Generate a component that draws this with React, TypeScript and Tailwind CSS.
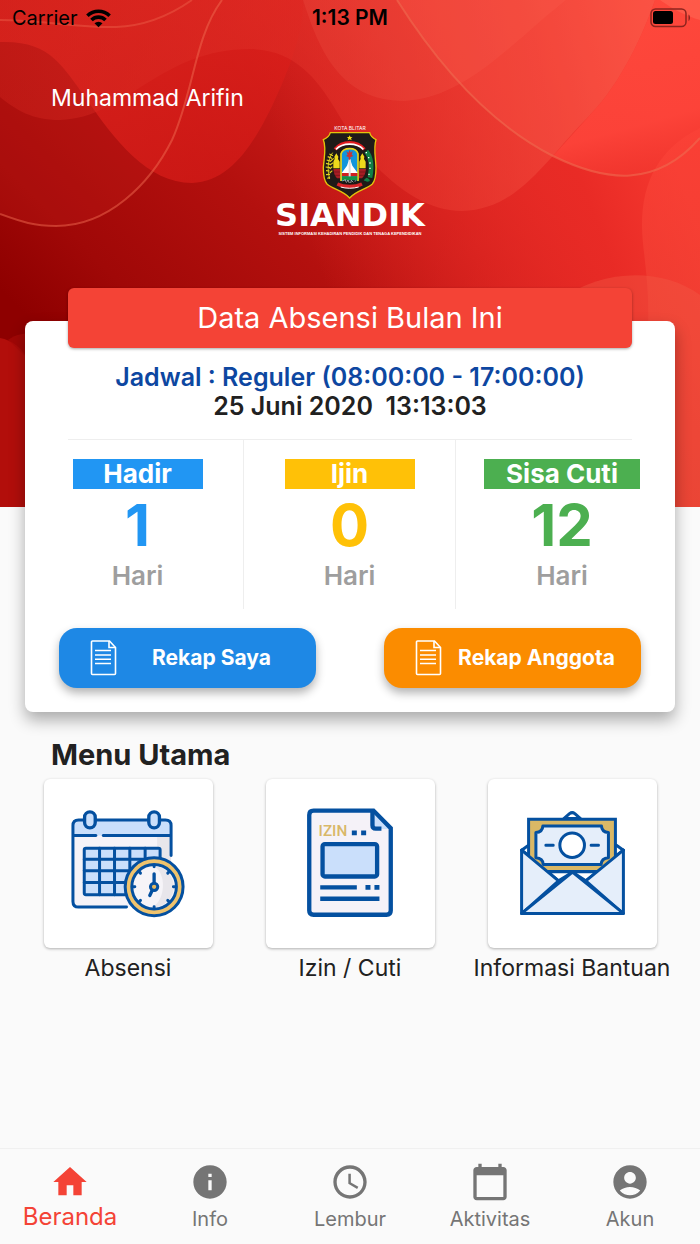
import React from "react";
import {
  MdAccessTime,
  MdAccountCircle,
  MdCalendarToday,
  MdHome,
  MdInfo,
} from "react-icons/md";

const BLUE = "#0450a0";
const SKY = "#cadffb";

function HeroArt() {
  return (
    <svg
      className="absolute inset-x-0 top-0 h-[507px] w-full"
      viewBox="0 0 700 507"
      preserveAspectRatio="none"
      aria-hidden="true"
    >
      <defs>
        <linearGradient id="base" gradientUnits="userSpaceOnUse" x1="0" y1="290" x2="400" y2="-110">
          <stop offset="0" stopColor="#8e0000" />
          <stop offset="0.16" stopColor="#a00807" />
          <stop offset="0.42" stopColor="#b3100e" />
          <stop offset="0.65" stopColor="#cc1d1a" />
          <stop offset="1" stopColor="#ee342c" />
        </linearGradient>
        <linearGradient id="glow" gradientUnits="userSpaceOnUse" x1="330" y1="300" x2="680" y2="180">
          <stop offset="0" stopColor="#e82a25" stopOpacity="0" />
          <stop offset="0.75" stopColor="#ea2b26" stopOpacity="0.9" />
          <stop offset="1" stopColor="#f5382f" />
        </linearGradient>
        <linearGradient id="wave" gradientUnits="userSpaceOnUse" x1="0" y1="140" x2="700" y2="0">
          <stop offset="0" stopColor="#d2241d" stopOpacity="0.4" />
          <stop offset="0.5" stopColor="#e4332b" stopOpacity="0.5" />
          <stop offset="1" stopColor="#fd5a49" stopOpacity="0.8" />
        </linearGradient>
        <linearGradient id="ridge" gradientUnits="userSpaceOnUse" x1="100" y1="0" x2="250" y2="190">
          <stop offset="0" stopColor="#de231d" stopOpacity="0.8" />
          <stop offset="1" stopColor="#d81b18" stopOpacity="0.65" />
        </linearGradient>
        <linearGradient id="edge" gradientUnits="userSpaceOnUse" x1="0" y1="150" x2="0" y2="507">
          <stop offset="0" stopColor="#fb4338" />
          <stop offset="1" stopColor="#e4402f" />
        </linearGradient>
        <linearGradient id="corner" gradientUnits="userSpaceOnUse" x1="600" y1="0" x2="650" y2="180">
          <stop offset="0" stopColor="#ff4a3d" stopOpacity="0.9" />
          <stop offset="0.7" stopColor="#fd443a" stopOpacity="0.9" />
          <stop offset="1" stopColor="#f0352d" stopOpacity="0.6" />
        </linearGradient>
      </defs>
      <rect width="700" height="507" fill="url(#base)" />
      <rect width="700" height="507" fill="url(#glow)" />
      <path d="M0 214C22 222 34 226 56 226C108 226 150 184 172 140C194 92 194 38 222 0H0Z" fill="#c9201b" opacity="0.25" />
      <path d="M0 42C50 40 62 66 86 98C114 140 148 183 192 183C236 182 262 130 282 84C298 46 303 24 303 0H0Z" fill="url(#ridge)" />
      <path d="M0 97C16 110 32 120 60 120C126 118 160 49 250 49C322 50 335 124 370 160C400 192 430 211 462 211C520 210 548 156 590 115C622 82 644 32 655 0H0Z" fill="url(#wave)" />
      <path d="M303 0C318 46 338 101 404 101C466 98 510 44 566 0Z" fill="#ff7a66" opacity="0.14" />
      <path d="M655 0C644 32 622 82 590 115L553 156C606 182 656 188 700 138V0Z" fill="url(#corner)" />
      <path d="M397 0C440 68 490 124 553 156L590 115C622 82 644 32 655 0Z" fill="#ff604e" opacity="0.25" />
      <path d="M700 128C660 148 642 180 642 226C642 250 650 280 648 330L640 507H700Z" fill="url(#edge)" opacity="0.65" />
      <path d="M560 300C600 270 660 266 700 295V507H560Z" fill="#f25a45" opacity="0.4" />
      <path d="M0 338C12 340 22 348 30 362V507H0Z" fill="#b20e0b" />
      <path d="M8 340C16 334 24 333 40 332V370Z" fill="#a80a08" opacity="0.7" />
      <path d="M660 0C674 10 686 16 700 20V0Z" fill="#ff6c58" opacity="0.5" />
      <g fill="none" stroke="#ef6a50" strokeWidth="2">
        <path d="M0 214C22 222 34 226 56 226C108 226 150 184 172 140C194 92 194 38 222 0" opacity="0.5" />
        <path d="M0 20C40 20 80 28 116 27C148 26 172 14 192 0" opacity="0.4" />
        <path d="M397 0C440 68 490 124 553 156C606 182 656 188 700 138" opacity="0.6" />
      </g>
    </svg>
  );
}

function StatusBar() {
  return (
    <div className="relative grid h-9 grid-cols-3 items-center px-3 text-xl text-black">
      <div className="flex items-center gap-2">
        <span>Carrier</span>
        <svg width="25" height="19" viewBox="0 0 25 19" aria-label="Wi-Fi">
          <g fill="none" stroke="#000" strokeWidth="3.600">
            <path d="M1.400 6.700A15.900 15.900 0 0 1 23.600 6.700" />
            <path d="M5.500 11A10 10 0 0 1 19.500 11" />
          </g>
          <path d="M12.500 18.300L8.500 14.300A5.800 5.800 0 0 1 16.500 14.300Z" />
        </svg>
      </div>
      <time className="text-center text-[21px] font-semibold">1:13 PM</time>
      <svg className="justify-self-end overflow-visible" width="38" height="20" viewBox="0 0 38 20" aria-label="Battery">
        <rect x="1" y="1" width="35" height="17.500" rx="4.500" fill="none" stroke="#8c241e" strokeWidth="1.500" />
        <rect x="3" y="3" width="20" height="13" rx="2.500" />
        <path d="M38.500 6.500c2 1 2 5.500 0 6.500z" fill="#8c241e" />
      </svg>
    </div>
  );
}

function Emblem() {
  return (
    <svg width="56" height="68" viewBox="184 48 168 204" aria-label="Kota Blitar">
      <path d="M209 53H327C330 64 337 70 346 74C338 98 345 128 346 158C346 180 344 196 335 207C318 223 288 226 267 249C246 226 216 223 199 207C190 196 188 180 188 158C190 128 198 98 188 74C198 70 206 64 209 53Z" fill="#1f1a18" stroke="#e2c30c" strokeWidth="4" />
      <path d="M267 61l2.500 5h6l-4.500 4 2 6-6-3.500-6 3.500 2-6-4.500-4h6z" fill="#f6dc12" />
      <path d="M223 103C245 76 289 76 311 103" fill="none" stroke="#e01c20" strokeWidth="10" />
      <path d="M226 103C246 82 288 82 308 103" fill="none" stroke="#fff" strokeWidth="5" />
      <path d="M241 198V116C248 96 286 96 292 116V198Z" fill="#1195dc" />
      <path d="M241 198V116C248 96 286 96 292 116V198" fill="none" stroke="#e9d51b" strokeWidth="5" />
      <path d="M244 174H290V184H244Z" fill="#d02020" />
      <path d="M244 184H290V196H244Z" fill="#149447" />
      <path d="M267 128l-8 24-16 22h48l-16-22z" fill="#fff" />
      <path d="M264 132h6v52h-6z" fill="#ddd" />
      <path d="M267 104l3 9 6-5-3 11 5 4-9 4v7h-5v-7l-8-4 5-4-4-10 6 5z" fill="#c83434" />
      <path d="M218 160V140l4-8-1-7 6-10 6 10-1 7 5 8v20z" fill="#efd91b" />
      <path d="M296 160V140l4-8-1-7 6-10 6 10-1 7 5 8v20z" fill="#efd91b" />
      <path d="M218 162H238V190H229C223 184 219 174 218 162ZM295 162H316C315 174 311 184 304 190H295Z" fill="#a71d24" />
      <path d="M218 171H238M295 171H316M222 181H238M295 181H311" stroke="#511" strokeWidth="1.500" />
      <path d="M216 113C200 134 200 166 207 192" fill="none" stroke="#c9c61e" strokeWidth="3" />
      <path d="M217 122l-11-5M214 130l-13-5M211 139l-13-4M209 148l-13-3M208 158l-13-2M207 168l-11-1M208 178l-12 1M208 187l-8 3M210 138l9-8M208 150l9-7M207 162l8-7M207 174l8-7" stroke="#e1d322" strokeWidth="3.500" />
      <path d="M317 109C331 126 335 153 328 188" fill="none" stroke="#108044" strokeWidth="14" />
      <path d="M317 188C326 190 330 196 326 199C319 202 313 198 309 196Z" fill="#108044" />
      <path d="M315 113h4M322 128h4M326 144h4M326 160h4M323 178h4" stroke="#fff" strokeWidth="4" />
      <path d="M230 207C250 217 284 217 304 207" fill="none" stroke="#d92328" strokeWidth="10" />
      <path d="M240 216C256 221 278 221 294 216" fill="none" stroke="#fff" strokeWidth="3" />
      <path d="M247 196C246 204 256 207 267 207S289 204 288 196Z" fill="#161616" />
      <path d="M246 198l8-4 1 6M257 203l5-8 4 9M270 204l2-8 6 6M282 199l4-2" fill="none" stroke="#ddd" strokeWidth="2" />
    </svg>
  );
}

function Logo() {
  return (
    <div className="flex flex-col items-center text-white">
      <span className="text-[5px] leading-[5px]">KOTA BLITAR</span>
      <Emblem />
      <span className="font-['DejaVu_Sans',sans-serif] text-[32px] leading-[32px] font-bold">SIANDIK</span>
      <span className="font-['Liberation_Sans',sans-serif] text-[4px] leading-[5px] font-bold whitespace-nowrap">
        SISTEM INFORMASI KEHADIRAN PENDIDIK DAN TENAGA KEPENDIDIKAN
      </span>
    </div>
  );
}

function DocumentIcon() {
  return (
    <svg width="27" height="36" viewBox="0 0 27 36" fill="none" stroke="#fff" strokeWidth="1.600" aria-hidden="true">
      <path d="M2.500 1H19.500L25.500 7.500V33.500a1 1 0 0 1-1 1H2.500a1 1 0 0 1-1-1V2a1 1 0 0 1 1-1z" />
      <path d="M19 1V7.500H25.500" />
      <path d="M5 10.500H21M5 15H21M5 19.200H21M5 23.500H21" strokeWidth="1.400" />
    </svg>
  );
}

function AttendanceIcon() {
  return (
    <svg className="h-full w-full" viewBox="0 0 508 508" aria-hidden="true">
      <path d="M86 140q0-18 18-18H364q18 0 18 18V375q0 10-10 10H104q-18 0-18-18z" fill="#f5f3f8" />
      <path d="M340 122h24q18 0 18 18v230h-42z" fill="#e8e6eb" />
      <path d="M86 170v-30q0-18 18-18H364q18 0 18 18v30z" fill={SKY} />
      <rect x="121" y="208" width="228" height="140" rx="5" fill={SKY} />
      <g fill="none" stroke={BLUE} strokeWidth="9" strokeLinecap="round">
        <path d="M248 385H104q-17 0-17-17V140q0-17 17-17H365q17 0 17 17v90" />
        <path d="M90 170H156M178 170H380" />
        <rect x="121" y="208" width="228" height="140" rx="5" />
        <path d="M167 208V348M212 208V348M258 208V348M304 208V348M121 241H349M121 276H349M121 311H349" />
      </g>
      <rect x="122" y="99" width="32" height="48" rx="16" fill={SKY} stroke={BLUE} strokeWidth="10" />
      <rect x="315" y="99" width="32" height="48" rx="16" fill={SKY} stroke={BLUE} strokeWidth="10" />
      <circle cx="331" cy="324" r="87" fill="#efc36d" stroke={BLUE} strokeWidth="9" />
      <circle cx="331" cy="324" r="67" fill="#f6f4f8" stroke={BLUE} strokeWidth="9" />
      <path d="M331 262C370 285 365 365 325 386A62 62 0 0 0 331 262z" fill="#e8e6eb" />
      <g stroke={BLUE} strokeWidth="9" strokeLinecap="round">
        <path d="M331 260v4M331 384v4M269 324h4M389 324h4M287 280l3 3M372 365l3 3M287 368l3-3M372 283l3-3" />
        <path d="M331 285V315M325 335l-7 15" strokeWidth="10" />
      </g>
      <circle cx="331" cy="324" r="11" fill="#e8b95d" stroke={BLUE} strokeWidth="9" />
    </svg>
  );
}

function LeaveIcon() {
  return (
    <svg className="h-full w-full" viewBox="0 0 508 508" aria-hidden="true">
      <path d="M130 108q0-13 13-13H320L375 150V395q0 13-13 13H143q-13 0-13-13z" fill="#f5f2f8" />
      <path d="M320 98L375 150H330q-10 0-10-10z" fill={SKY} />
      <g fill="none" stroke={BLUE} strokeWidth="13">
        <path d="M130 108q0-13 13-13H323L375 148V395q0 13-13 13H143q-13 0-13-13z" />
        <path d="M320 94V139q0 10 10 10h17" />
        <rect x="170" y="196" width="164" height="97" rx="7" fill={SKY} />
        <path d="M163 326H273M163 360H341" />
        <path d="M258 162h15M286 162h15M299 326h15M326 326h15" strokeWidth="14" />
      </g>
      <text x="158" y="170" fill="#d9b868" fontFamily="Roboto, sans-serif" fontSize="46" fontWeight="500">
        IZIN
      </text>
    </svg>
  );
}

function AidIcon() {
  return (
    <svg className="h-full w-full" viewBox="0 0 508 508" aria-hidden="true">
      <g stroke={BLUE} strokeWidth="9" strokeLinejoin="round" strokeLinecap="round">
        <path d="M228 119L245 104q8-6 16 0L278 119z" fill="#fff" />
        <path d="M122 199L101 214 122 230M386 199L407 214 386 230" fill="#fff" />
        <path d="M122 121H383V278H122z" fill="#d9b866" strokeLinejoin="miter" />
        <path d="M165 141H341Q342 160 362 161V237Q341 238 340 257H166Q165 238 144 237V161Q164 160 165 141z" fill="#e5eefa" />
        <circle cx="253" cy="199" r="37" fill="#fff" />
        <path d="M174 199h22M310 199h22" fill="none" />
        <path d="M180 279H328L294 306 254 280 212 306z" fill="#fff" />
        <path d="M101 214L212 306 105 402M407 214L294 306 403 402" fill="#e5eefa" />
        <path d="M101 404L254 280 407 404z" fill="#e5eefa" />
        <path d="M101 214V404H407V214" fill="none" />
      </g>
    </svg>
  );
}

const stats = [
  { label: "Hadir", value: 1, badge: "bg-[#2196f3]", text: "text-[#2196f3]" },
  { label: "Ijin", value: 0, badge: "bg-[#ffc107]", text: "text-[#ffc107]" },
  { label: "Sisa Cuti", value: 12, badge: "bg-[#4caf50]", text: "text-[#4caf50]" },
];

const recaps = [
  { label: "Rekap Saya", color: "bg-[#1e88e5]" },
  { label: "Rekap Anggota", color: "bg-[#fb8c00]" },
];

const menu = [
  { label: "Absensi", Icon: AttendanceIcon },
  { label: "Izin / Cuti", Icon: LeaveIcon },
  { label: "Informasi Bantuan", Icon: AidIcon },
];

const tabs = [
  { label: "Beranda", Icon: MdHome, active: true },
  { label: "Info", Icon: MdInfo, active: false },
  { label: "Lembur", Icon: MdAccessTime, active: false },
  { label: "Aktivitas", Icon: MdCalendarToday, active: false },
  { label: "Akun", Icon: MdAccountCircle, active: false },
];

function SummaryCard() {
  return (
    <section className="relative mx-[25px] mt-[85px] flow-root rounded-lg bg-white pb-6 shadow-[0_8px_16px_rgba(0,0,0,0.32)]">
      <h1 className="mx-[43px] -mt-[33px] rounded-md bg-[#f44336] text-center text-[29px] leading-[60px] text-white shadow-[0_1px_3px_rgba(0,0,0,0.35)]">
        Data Absensi Bulan Ini
      </h1>
      <div className="mx-[43px] border-b border-[#eeeeee] pt-[15px] pb-[18px] text-center text-[25px] leading-[29px] font-semibold">
        <p className="whitespace-nowrap text-[#0d47a1]">Jadwal : Reguler (08:00:00 - 17:00:00)</p>
        <p className="whitespace-pre">25 Juni 2020  13:13:03</p>
      </div>
      <dl className="mx-[7px] grid grid-cols-3 divide-x divide-[#eeeeee]">
        {stats.map((s) => (
          <div key={s.label} className="flex h-[169px] flex-col items-center pt-[19px] font-bold">
            <dt className={`min-w-[130px] px-[22px] text-center text-[26px] leading-[30px] text-white ${s.badge}`}>
              {s.label}
            </dt>
            <dd className={`text-[58px] leading-[72px] ${s.text}`}>{s.value}</dd>
            <dd className="text-[26px] leading-[30px] font-semibold text-[#9e9e9e]">Hari</dd>
          </div>
        ))}
      </dl>
      <div className="flex justify-between px-[34px] pt-[19px]">
        {recaps.map((r) => (
          <button
            key={r.label}
            type="button"
            className={`flex h-[60px] w-[257px] items-center rounded-[18px] pr-[10px] pl-[31px] text-[21px] font-bold text-white shadow-[0_5px_10px_rgba(0,0,0,0.3)] ${r.color}`}
          >
            <DocumentIcon />
            <span className="flex-1 text-center whitespace-nowrap">{r.label}</span>
          </button>
        ))}
      </div>
    </section>
  );
}

export default function App() {
  return (
    <div className="relative flex min-h-screen flex-col bg-[#fafafa] font-['Inter',sans-serif] text-[#212121]">
      <HeroArt />
      <StatusBar />
      <header className="relative">
        <p className="px-[51px] pt-[47px] text-[23px] leading-[30px] text-white">Muhammad Arifin</p>
        <div className="pt-[13px]">
          <Logo />
        </div>
      </header>
      <SummaryCard />
      <main className="flex-1 pt-[25px]">
        <h2 className="px-[51px] text-[29px] leading-[36px] font-bold">Menu Utama</h2>
        <ul className="mt-[6px] grid grid-cols-3 px-[17px]">
          {menu.map(({ label, Icon }) => (
            <li key={label}>
              <a href="#" className="flex flex-col items-center">
                <span className="block size-[169px] rounded-md bg-white shadow-[0_1px_3px_rgba(0,0,0,0.3)]">
                  <Icon />
                </span>
                <span className="pt-[5px] text-[23px] leading-[30px] whitespace-nowrap">{label}</span>
              </a>
            </li>
          ))}
        </ul>
      </main>
      <nav className="grid h-24 grid-cols-5 border-t border-[#f0f0f0]">
        {tabs.map(({ label, Icon, active }) => (
          <a
            key={label}
            href="#"
            className={`flex flex-col items-center pt-[13px] ${
              active ? "text-2xl leading-[30px] text-[#f44336]" : "text-xl leading-[34px] text-[#757575]"
            }`}
          >
            <Icon size={40} />
            <span>{label}</span>
          </a>
        ))}
      </nav>
    </div>
  );
}
